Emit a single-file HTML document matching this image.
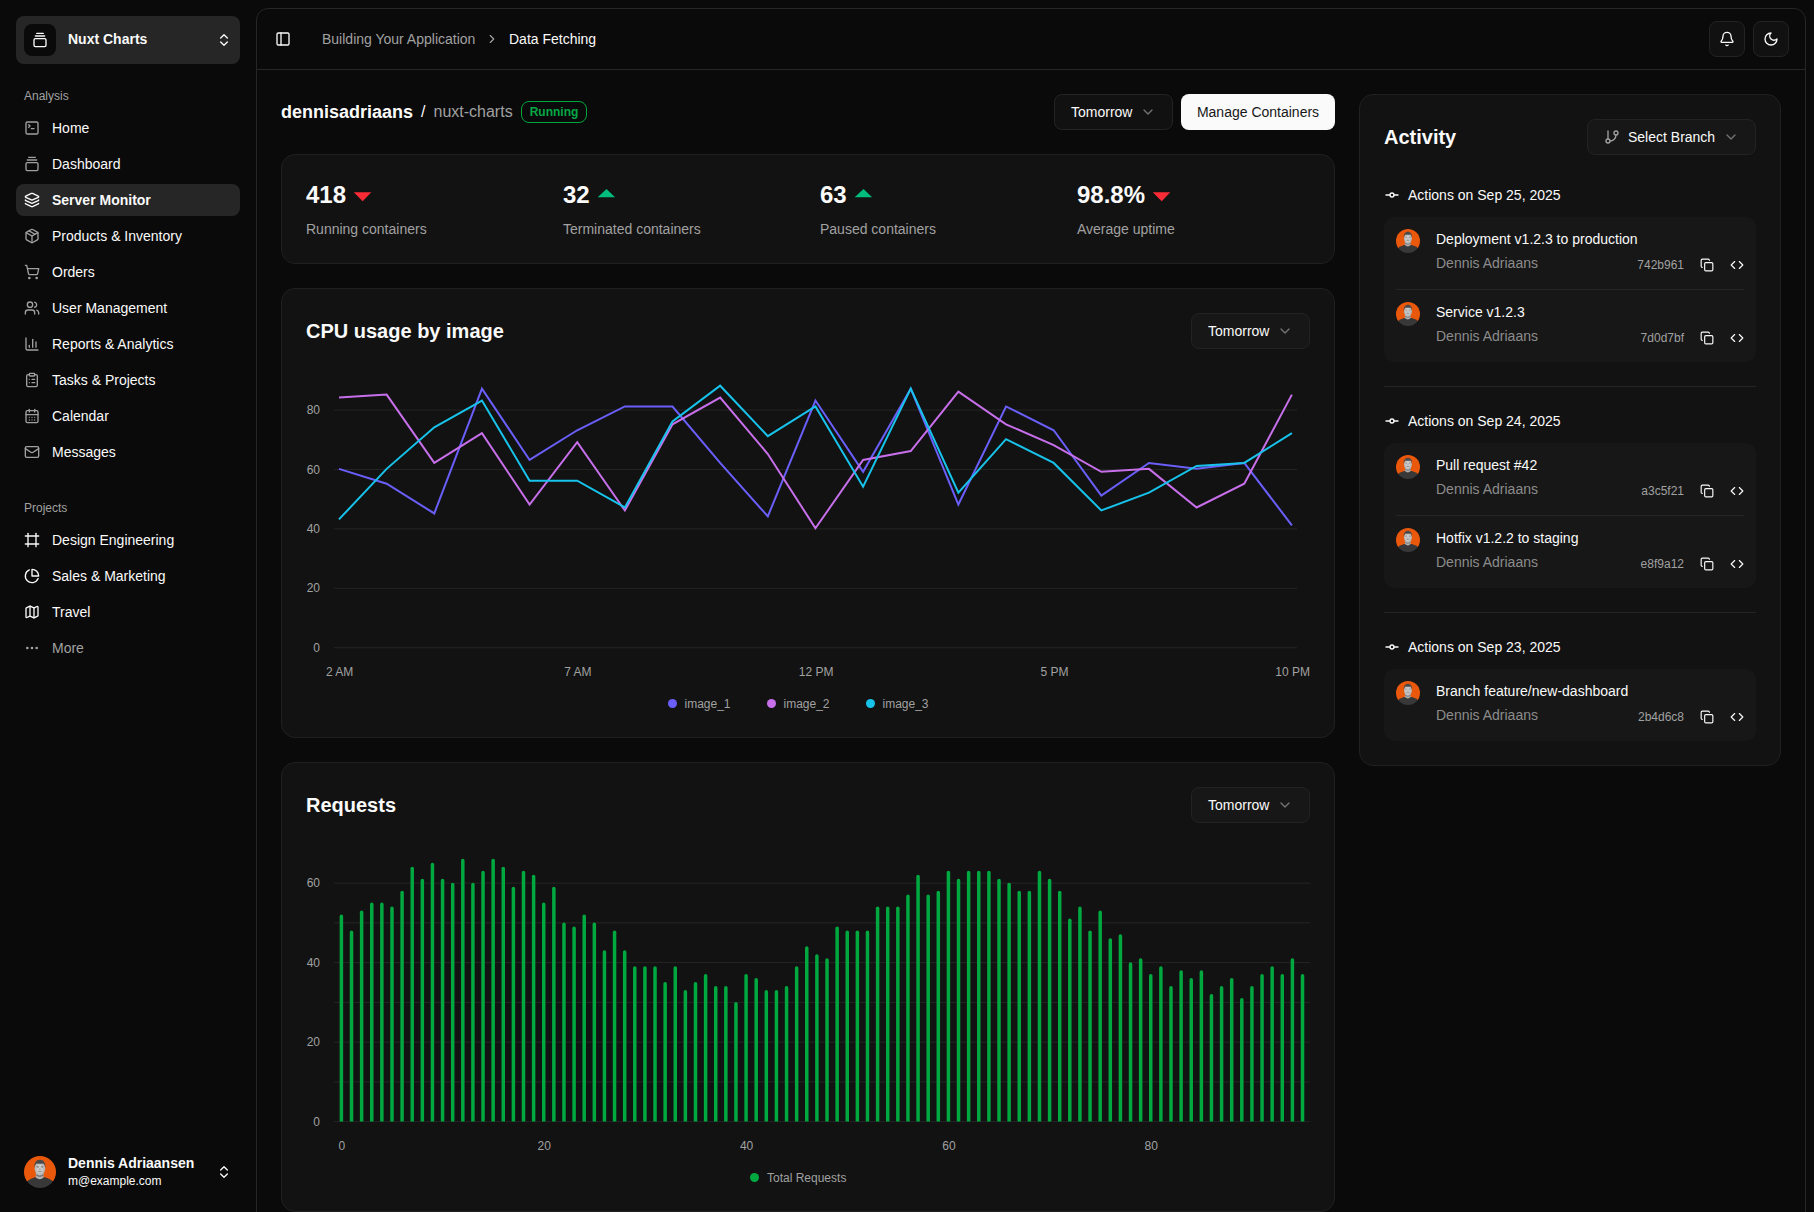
<!DOCTYPE html>
<html lang="en"><head><meta charset="utf-8"><title>Nuxt Charts - Server Monitor</title>
<style>
*{box-sizing:border-box;margin:0;padding:0}
html,body{width:1814px;height:1212px;overflow:hidden;background:#0a0a0a}
body{font-family:"Liberation Sans",sans-serif;color:#fafafa;position:relative}
.ic{position:absolute;display:block;overflow:visible}
.t{position:absolute;white-space:nowrap;color:#fafafa}
.b{font-weight:700}
.lbl{font-size:12px;line-height:16px;color:#a1a1a1}
.mi{font-size:14px;line-height:20px}
.team{position:absolute;left:16px;top:16px;width:224px;height:48px;border-radius:8px;background:#262626}
.teamicon{position:absolute;left:24px;top:24px;width:32px;height:32px;border-radius:8px;background:#0a0a0a}
.active{position:absolute;left:16px;width:224px;height:32px;border-radius:8px;background:#262626}
.inset{position:absolute;left:256px;top:8px;width:1550px;height:1230px;border:1px solid #262626;border-radius:12px;background:#0a0a0a}
.hline{position:absolute;left:257px;top:69px;width:1548px;height:1px;background:#262626}
.btn{position:absolute;border:1px solid #232323;border-radius:8px;background:#111111}
.btnw{position:absolute;border-radius:8px;background:#fafafa;color:#171717;font-size:14px;line-height:36px;text-align:center;white-space:nowrap}
.badge{position:absolute;border:1px solid #00a63e;border-radius:8px;color:#05a845;font-size:12px;font-weight:700;line-height:20px;text-align:center}
.card{position:absolute;border:1px solid #202020;border-radius:14px;background:#121212}
.num{font-size:24px;line-height:32px}
.ax{font-size:12px;line-height:16px;color:#a1a1a1}
.dot{position:absolute;width:9px;height:9px;border-radius:50%}
.abox{position:absolute;border-radius:10px;background:#171717}
.adiv{position:absolute;height:1px;background:#262626}
</style></head>
<body>
<!-- sidebar -->
<div class="team"></div><div class="teamicon"></div>
<svg class="ic" style="left:32px;top:32px;width:16px;height:16px;color:#fafafa" viewBox="0 0 24 24" fill="none" stroke="currentColor" stroke-width="2" stroke-linecap="round" stroke-linejoin="round" ><path d="M7 2h10"/><path d="M5 6h14"/><rect width="18" height="12" x="3" y="10" rx="2"/></svg>
<div class="t b" style="left:68px;top:29px;font-size:14px;line-height:20px">Nuxt Charts</div>
<svg class="ic" style="left:216px;top:32px;width:16px;height:16px;color:#fafafa" viewBox="0 0 24 24" fill="none" stroke="currentColor" stroke-width="2" stroke-linecap="round" stroke-linejoin="round" ><path d="m7 15 5 5 5-5"/><path d="m7 9 5-5 5 5"/></svg>
<div class="t lbl" style="left:24px;top:88px">Analysis</div>
<svg class="ic" style="left:24px;top:120px;width:16px;height:16px;color:#a1a1a1" viewBox="0 0 24 24" fill="none" stroke="currentColor" stroke-width="2" stroke-linecap="round" stroke-linejoin="round" ><path d="m7 11 2-2-2-2"/><path d="M11 13h4"/><rect width="18" height="18" x="3" y="3" rx="2" ry="2"/></svg>
<div class="t mi" style="left:52px;top:118px">Home</div>
<svg class="ic" style="left:24px;top:156px;width:16px;height:16px;color:#a1a1a1" viewBox="0 0 24 24" fill="none" stroke="currentColor" stroke-width="2" stroke-linecap="round" stroke-linejoin="round" ><path d="M7 2h10"/><path d="M5 6h14"/><rect width="18" height="12" x="3" y="10" rx="2"/></svg>
<div class="t mi" style="left:52px;top:154px">Dashboard</div>
<div class="active" style="top:184px"></div>
<svg class="ic" style="left:24px;top:192px;width:16px;height:16px;color:#fafafa" viewBox="0 0 24 24" fill="none" stroke="currentColor" stroke-width="2" stroke-linecap="round" stroke-linejoin="round" ><path d="M12.83 2.18a2 2 0 0 0-1.66 0L2.6 6.08a1 1 0 0 0 0 1.83l8.58 3.91a2 2 0 0 0 1.66 0l8.58-3.9a1 1 0 0 0 0-1.83z"/><path d="M2 12a1 1 0 0 0 .58.91l8.6 3.91a2 2 0 0 0 1.65 0l8.58-3.9A1 1 0 0 0 22 12"/><path d="M2 17a1 1 0 0 0 .58.91l8.6 3.91a2 2 0 0 0 1.65 0l8.58-3.9A1 1 0 0 0 22 17"/></svg>
<div class="t mi b" style="left:52px;top:190px">Server Monitor</div>
<svg class="ic" style="left:24px;top:228px;width:16px;height:16px;color:#a1a1a1" viewBox="0 0 24 24" fill="none" stroke="currentColor" stroke-width="2" stroke-linecap="round" stroke-linejoin="round" ><path d="M11 21.73a2 2 0 0 0 2 0l7-4A2 2 0 0 0 21 16V8a2 2 0 0 0-1-1.73l-7-4a2 2 0 0 0-2 0l-7 4A2 2 0 0 0 3 8v8a2 2 0 0 0 1 1.73z"/><path d="M12 22V12"/><polyline points="3.29 7 12 12 20.71 7"/><path d="m7.5 4.27 9 5.15"/></svg>
<div class="t mi" style="left:52px;top:226px">Products &amp; Inventory</div>
<svg class="ic" style="left:24px;top:264px;width:16px;height:16px;color:#a1a1a1" viewBox="0 0 24 24" fill="none" stroke="currentColor" stroke-width="2" stroke-linecap="round" stroke-linejoin="round" ><circle cx="8" cy="21" r="1"/><circle cx="19" cy="21" r="1"/><path d="M2.05 2.05h2l2.66 12.42a2 2 0 0 0 2 1.58h9.78a2 2 0 0 0 1.95-1.57l1.65-7.43H5.12"/></svg>
<div class="t mi" style="left:52px;top:262px">Orders</div>
<svg class="ic" style="left:24px;top:300px;width:16px;height:16px;color:#a1a1a1" viewBox="0 0 24 24" fill="none" stroke="currentColor" stroke-width="2" stroke-linecap="round" stroke-linejoin="round" ><path d="M16 21v-2a4 4 0 0 0-4-4H6a4 4 0 0 0-4 4v2"/><circle cx="9" cy="7" r="4"/><path d="M22 21v-2a4 4 0 0 0-3-3.87"/><path d="M16 3.13a4 4 0 0 1 0 7.75"/></svg>
<div class="t mi" style="left:52px;top:298px">User Management</div>
<svg class="ic" style="left:24px;top:336px;width:16px;height:16px;color:#a1a1a1" viewBox="0 0 24 24" fill="none" stroke="currentColor" stroke-width="2" stroke-linecap="round" stroke-linejoin="round" ><path d="M3 3v16a2 2 0 0 0 2 2h16"/><path d="M18 17V9"/><path d="M13 17V5"/><path d="M8 17v-3"/></svg>
<div class="t mi" style="left:52px;top:334px">Reports &amp; Analytics</div>
<svg class="ic" style="left:24px;top:372px;width:16px;height:16px;color:#a1a1a1" viewBox="0 0 24 24" fill="none" stroke="currentColor" stroke-width="2" stroke-linecap="round" stroke-linejoin="round" ><rect width="8" height="4" x="8" y="2" rx="1" ry="1"/><path d="M16 4h2a2 2 0 0 1 2 2v14a2 2 0 0 1-2 2H6a2 2 0 0 1-2-2V6a2 2 0 0 1 2-2h2"/><path d="M12 11h4"/><path d="M12 16h4"/><path d="M8 11h.01"/><path d="M8 16h.01"/></svg>
<div class="t mi" style="left:52px;top:370px">Tasks &amp; Projects</div>
<svg class="ic" style="left:24px;top:408px;width:16px;height:16px;color:#a1a1a1" viewBox="0 0 24 24" fill="none" stroke="currentColor" stroke-width="2" stroke-linecap="round" stroke-linejoin="round" ><path d="M8 2v4"/><path d="M16 2v4"/><rect width="18" height="18" x="3" y="4" rx="2"/><path d="M3 10h18"/><path d="M8 14h.01"/><path d="M12 14h.01"/><path d="M16 14h.01"/><path d="M8 18h.01"/><path d="M12 18h.01"/><path d="M16 18h.01"/></svg>
<div class="t mi" style="left:52px;top:406px">Calendar</div>
<svg class="ic" style="left:24px;top:444px;width:16px;height:16px;color:#a1a1a1" viewBox="0 0 24 24" fill="none" stroke="currentColor" stroke-width="2" stroke-linecap="round" stroke-linejoin="round" ><rect width="20" height="16" x="2" y="4" rx="2"/><path d="m22 7-8.97 5.7a1.94 1.94 0 0 1-2.06 0L2 7"/></svg>
<div class="t mi" style="left:52px;top:442px">Messages</div>
<div class="t lbl" style="left:24px;top:500px">Projects</div>
<svg class="ic" style="left:24px;top:532px;width:16px;height:16px;color:#fafafa" viewBox="0 0 24 24" fill="none" stroke="currentColor" stroke-width="2" stroke-linecap="round" stroke-linejoin="round" ><line x1="22" x2="2" y1="6" y2="6"/><line x1="22" x2="2" y1="18" y2="18"/><line x1="6" x2="6" y1="2" y2="22"/><line x1="18" x2="18" y1="2" y2="22"/></svg>
<div class="t mi" style="left:52px;top:530px">Design Engineering</div>
<svg class="ic" style="left:24px;top:568px;width:16px;height:16px;color:#fafafa" viewBox="0 0 24 24" fill="none" stroke="currentColor" stroke-width="2" stroke-linecap="round" stroke-linejoin="round" ><path d="M21.21 15.89A10 10 0 1 1 8 2.83"/><path d="M22 12A10 10 0 0 0 12 2v10z"/></svg>
<div class="t mi" style="left:52px;top:566px">Sales &amp; Marketing</div>
<svg class="ic" style="left:24px;top:604px;width:16px;height:16px;color:#fafafa" viewBox="0 0 24 24" fill="none" stroke="currentColor" stroke-width="2" stroke-linecap="round" stroke-linejoin="round" ><path d="M14.106 5.553a2 2 0 0 0 1.788 0l3.659-1.83A1 1 0 0 1 21 4.619v12.764a1 1 0 0 1-.553.894l-4.553 2.277a2 2 0 0 1-1.788 0l-4.212-2.106a2 2 0 0 0-1.788 0l-3.659 1.83A1 1 0 0 1 3 19.381V6.618a1 1 0 0 1 .553-.894l4.553-2.277a2 2 0 0 1 1.788 0z"/><path d="M15 5.764v15"/><path d="M9 3.236v15"/></svg>
<div class="t mi" style="left:52px;top:602px">Travel</div>
<svg class="ic" style="left:24px;top:640px;width:16px;height:16px;color:#a1a1a1" viewBox="0 0 24 24" fill="none" stroke="currentColor" stroke-width="2" stroke-linecap="round" stroke-linejoin="round" ><circle cx="12" cy="12" r="1"/><circle cx="19" cy="12" r="1"/><circle cx="5" cy="12" r="1"/></svg>
<div class="t mi" style="left:52px;top:638px;color:#a1a1a1">More</div>
<svg class="ic" style="left:24px;top:1156px;width:32px;height:32px" viewBox="0 0 32 32"><defs><clipPath id="avc"><circle cx="16" cy="16" r="16"/></clipPath></defs><g clip-path="url(#avc)"><path d="M0 0H32V25.300H28.800L20 22H12L3.200 25.300H0z" fill="#ea580c"/><path d="M1.500 26.500Q5 22.800 11 21.200H21Q27 22.800 30.500 26.500L32.500 32.500H-.500z" fill="#383838"/><path d="M11.900 16h7.400l.3 5.400q-3.600 3.600-7.900 0z" fill="#b0b0b0"/><path d="M12.300 18.300q3.700 2.600 7 0l.1 1.200q-3.600 2.600-7.200 0z" fill="#6b6b6b"/><ellipse cx="15.900" cy="12.400" rx="5.300" ry="6.900" fill="#b6b6b6"/><ellipse cx="15.700" cy="12.800" rx="3.400" ry="5" fill="#c8c8c8"/><path d="M10.400 12c-.5-5 1.800-8.200 5.500-8.200s6 3.200 5.500 8.200c-.5-2.600-1-3.900-2.200-4.600-2.200.5-4.400.5-6.600 0-1.200.7-1.700 2-2.200 4.600z" fill="#4a4a4a"/><ellipse cx="13.600" cy="10.800" rx="1.200" ry=".6" fill="#6a6a6a"/><ellipse cx="18.200" cy="10.800" rx="1.200" ry=".6" fill="#6a6a6a"/><path d="M13.500 14.700Q15.900 17.400 18.300 14.700Q15.900 15.700 13.500 14.700z" fill="#6f6f6f"/><ellipse cx="15.900" cy="13.200" rx=".8" ry="1" fill="#a8a8a8"/></g></svg>
<div class="t b" style="left:68px;top:1153px;font-size:14px;line-height:20px">Dennis Adriaansen</div>
<div class="t" style="left:68px;top:1173px;font-size:12px;line-height:16px">m@example.com</div>
<svg class="ic" style="left:216px;top:1164px;width:16px;height:16px;color:#fafafa" viewBox="0 0 24 24" fill="none" stroke="currentColor" stroke-width="2" stroke-linecap="round" stroke-linejoin="round" ><path d="m7 15 5 5 5-5"/><path d="m7 9 5-5 5 5"/></svg>
<!-- header -->
<div class="inset"></div><div class="hline"></div>
<svg class="ic" style="left:275px;top:31px;width:16px;height:16px;color:#fafafa" viewBox="0 0 24 24" fill="none" stroke="currentColor" stroke-width="2" stroke-linecap="round" stroke-linejoin="round" ><rect width="18" height="18" x="3" y="3" rx="2"/><path d="M9 3v18"/></svg>
<div class="t" style="left:322px;top:29px;font-size:14px;line-height:20px;color:#a1a1a1">Building Your Application</div>
<svg class="ic" style="left:485px;top:32px;width:14px;height:14px;color:#a1a1a1" viewBox="0 0 24 24" fill="none" stroke="currentColor" stroke-width="2" stroke-linecap="round" stroke-linejoin="round" ><path d="m9 18 6-6-6-6"/></svg>
<div class="t" style="left:509px;top:29px;font-size:14px;line-height:20px">Data Fetching</div>
<div class="btn" style="left:1709px;top:21px;width:36px;height:36px"></div>
<div class="btn" style="left:1753px;top:21px;width:36px;height:36px"></div>
<svg class="ic" style="left:1719px;top:31px;width:16px;height:16px;color:#fafafa" viewBox="0 0 24 24" fill="none" stroke="currentColor" stroke-width="2" stroke-linecap="round" stroke-linejoin="round" ><path d="M10.268 21a2 2 0 0 0 3.464 0"/><path d="M3.262 15.326A1 1 0 0 0 4 17h16a1 1 0 0 0 .74-1.673C19.41 13.956 18 12.499 18 8A6 6 0 0 0 6 8c0 4.499-1.411 5.956-2.738 7.326"/></svg>
<svg class="ic" style="left:1763px;top:31px;width:16px;height:16px;color:#fafafa" viewBox="0 0 24 24" fill="none" stroke="currentColor" stroke-width="2" stroke-linecap="round" stroke-linejoin="round" ><path d="M12 3a6 6 0 0 0 9 9 9 9 0 1 1-9-9Z"/></svg>
<!-- top -->
<div class="t b" style="left:281px;top:98px;font-size:18px;line-height:28px">dennisadriaans</div>
<div class="t" style="left:421px;top:100px;font-size:16px;line-height:24px">/</div>
<div class="t" style="left:433.5px;top:100px;font-size:16px;line-height:24px;color:#a1a1a1">nuxt-charts</div>
<div class="badge" style="left:521px;top:101px;width:66px;height:22px">Running</div>
<div class="btn" style="left:1054px;top:94px;width:119px;height:36px;background:#111111"></div><div class="t" style="left:1071px;top:102px;font-size:14px;line-height:20px">Tomorrow</div><svg class="ic" style="left:1140px;top:104px;width:16px;height:16px;color:#737373" viewBox="0 0 24 24" fill="none" stroke="currentColor" stroke-width="2" stroke-linecap="round" stroke-linejoin="round" ><path d="m6 9 6 6 6-6"/></svg>
<div class="btnw" style="left:1181px;top:94px;width:154px;height:36px">Manage Containers</div>
<div class="card" style="left:281px;top:154px;width:1054px;height:110px"></div>
<div class="t b num" id="n306" style="left:306px;top:179px">418</div>
<div class="t" style="left:306px;top:219px;font-size:14px;line-height:20px;color:#a1a1a1">Running containers</div>
<div class="t b num" id="n563" style="left:563px;top:179px">32</div>
<div class="t" style="left:563px;top:219px;font-size:14px;line-height:20px;color:#a1a1a1">Terminated containers</div>
<div class="t b num" id="n820" style="left:820px;top:179px">63</div>
<div class="t" style="left:820px;top:219px;font-size:14px;line-height:20px;color:#a1a1a1">Paused containers</div>
<div class="t b num" id="n1077" style="left:1077px;top:179px">98.8%</div>
<div class="t" style="left:1077px;top:219px;font-size:14px;line-height:20px;color:#a1a1a1">Average uptime</div>
<svg class="ic" style="left:353.8px;top:192.0px;width:17.6px;height:9.4px" viewBox="0 0 17.6 9.4"><path d="M-0.25 0.25H17.3L8.700 9.3z" fill="#fb2c36"/></svg>
<svg class="ic" style="left:597.6px;top:188.4px;width:17.6px;height:9.2px" viewBox="0 0 17.6 9.2"><path d="M-0.35 9.3H17.15L8.500 0.950z" fill="#00bc7d"/></svg>
<svg class="ic" style="left:854.6px;top:188.4px;width:17.6px;height:9.2px" viewBox="0 0 17.6 9.2"><path d="M-0.35 9.3H17.15L8.500 0.950z" fill="#00bc7d"/></svg>
<svg class="ic" style="left:1153.1px;top:192.0px;width:17.6px;height:9.4px" viewBox="0 0 17.6 9.4"><path d="M-0.25 0.25H17.3L8.700 9.3z" fill="#fb2c36"/></svg>
<!-- cpu -->
<div class="card" style="left:281px;top:288px;width:1054px;height:450px"></div>
<div class="t b" style="left:306px;top:317px;font-size:20px;line-height:28px">CPU usage by image</div>
<div class="btn" style="left:1191px;top:313px;width:119px;height:36px;background:#171717"></div><div class="t" style="left:1208px;top:321px;font-size:14px;line-height:20px">Tomorrow</div><svg class="ic" style="left:1277px;top:323px;width:16px;height:16px;color:#737373" viewBox="0 0 24 24" fill="none" stroke="currentColor" stroke-width="2" stroke-linecap="round" stroke-linejoin="round" ><path d="m6 9 6 6 6-6"/></svg>
<svg class="ic" style="left:0;top:0;width:1814px;height:1212px" viewBox="0 0 1814 1212"><rect x="334" y="647.20" width="963" height="1" fill="#252525"/><rect x="334" y="587.79" width="963" height="1" fill="#252525"/><rect x="334" y="528.38" width="963" height="1" fill="#252525"/><rect x="334" y="468.96" width="963" height="1" fill="#252525"/><rect x="334" y="409.55" width="963" height="1" fill="#252525"/><polyline points="339.00,468.86 386.64,483.72 434.29,513.42 481.94,388.66 529.58,459.95 577.23,430.25 624.87,406.48 672.52,406.48 720.16,462.92 767.81,516.39 815.45,400.54 863.10,471.83 910.74,388.66 958.38,504.51 1006.03,406.48 1053.68,430.25 1101.32,495.60 1148.97,462.92 1196.61,468.86 1244.26,462.92 1291.90,525.31" fill="none" stroke="#6a5ffb" stroke-width="2" stroke-linejoin="miter" stroke-linecap="butt"/><polyline points="339.00,397.57 386.64,394.60 434.29,462.92 481.94,433.22 529.58,504.51 577.23,442.13 624.87,510.45 672.52,424.31 720.16,397.57 767.81,454.01 815.45,528.28 863.10,459.95 910.74,451.04 958.38,391.63 1006.03,424.31 1053.68,445.10 1101.32,471.83 1148.97,468.86 1196.61,507.48 1244.26,483.72 1291.90,394.60" fill="none" stroke="#c76fea" stroke-width="2" stroke-linejoin="miter" stroke-linecap="butt"/><polyline points="339.00,519.36 386.64,468.86 434.29,427.28 481.94,400.54 529.58,480.75 577.23,480.75 624.87,507.48 672.52,421.33 720.16,385.69 767.81,436.19 815.45,406.48 863.10,486.69 910.74,388.66 958.38,492.63 1006.03,439.16 1053.68,462.92 1101.32,510.45 1148.97,492.63 1196.61,465.89 1244.26,462.92 1291.90,433.22" fill="none" stroke="#17c3eb" stroke-width="2" stroke-linejoin="miter" stroke-linecap="butt"/></svg>
<div class="t ax" style="left:290px;width:30px;text-align:right;top:639.7px">0</div>
<div class="t ax" style="left:290px;width:30px;text-align:right;top:580.3px">20</div>
<div class="t ax" style="left:290px;width:30px;text-align:right;top:520.9px">40</div>
<div class="t ax" style="left:290px;width:30px;text-align:right;top:461.5px">60</div>
<div class="t ax" style="left:290px;width:30px;text-align:right;top:402.1px">80</div>
<div class="t ax" style="left:299.7px;width:80px;text-align:center;top:664px">2 AM</div>
<div class="t ax" style="left:537.9px;width:80px;text-align:center;top:664px">7 AM</div>
<div class="t ax" style="left:776.2px;width:80px;text-align:center;top:664px">12 PM</div>
<div class="t ax" style="left:1014.4px;width:80px;text-align:center;top:664px">5 PM</div>
<div class="t ax" style="left:1252.6px;width:80px;text-align:center;top:664px">10 PM</div>
<div class="dot" style="left:667.5px;top:699.0px;background:#6a5ffb"></div>
<div class="t ax" style="left:684.5px;top:696px">image_1</div>
<div class="dot" style="left:766.5px;top:699.0px;background:#c76fea"></div>
<div class="t ax" style="left:783.5px;top:696px">image_2</div>
<div class="dot" style="left:865.5px;top:699.0px;background:#17c3eb"></div>
<div class="t ax" style="left:882.5px;top:696px">image_3</div>
<!-- requests -->
<div class="card" style="left:281px;top:762px;width:1054px;height:450px"></div>
<div class="t b" style="left:306px;top:791px;font-size:20px;line-height:28px">Requests</div>
<div class="btn" style="left:1191px;top:787px;width:119px;height:36px;background:#171717"></div><div class="t" style="left:1208px;top:795px;font-size:14px;line-height:20px">Tomorrow</div><svg class="ic" style="left:1277px;top:797px;width:16px;height:16px;color:#737373" viewBox="0 0 24 24" fill="none" stroke="currentColor" stroke-width="2" stroke-linecap="round" stroke-linejoin="round" ><path d="m6 9 6 6 6-6"/></svg>
<svg class="ic" style="left:0;top:0;width:1814px;height:1212px" viewBox="0 0 1814 1212"><rect x="334" y="1121.10" width="976" height="1" fill="#252525"/><rect x="334" y="1081.35" width="976" height="1" fill="#252525"/><rect x="334" y="1041.60" width="976" height="1" fill="#252525"/><rect x="334" y="1001.85" width="976" height="1" fill="#252525"/><rect x="334" y="962.10" width="976" height="1" fill="#252525"/><rect x="334" y="922.35" width="976" height="1" fill="#252525"/><rect x="334" y="882.60" width="976" height="1" fill="#252525"/><path d="M339.65 1121.6V916.25a1.75 1.75 0 0 1 3.5 0V1121.6z" fill="#00a940"/><path d="M349.77 1121.6V932.15a1.75 1.75 0 0 1 3.5 0V1121.6z" fill="#00a940"/><path d="M359.88 1121.6V912.27a1.75 1.75 0 0 1 3.5 0V1121.6z" fill="#00a940"/><path d="M370.00 1121.6V904.32a1.75 1.75 0 0 1 3.5 0V1121.6z" fill="#00a940"/><path d="M380.12 1121.6V904.32a1.75 1.75 0 0 1 3.5 0V1121.6z" fill="#00a940"/><path d="M390.24 1121.6V908.30a1.75 1.75 0 0 1 3.5 0V1121.6z" fill="#00a940"/><path d="M400.35 1121.6V892.40a1.75 1.75 0 0 1 3.5 0V1121.6z" fill="#00a940"/><path d="M410.47 1121.6V868.55a1.75 1.75 0 0 1 3.5 0V1121.6z" fill="#00a940"/><path d="M420.59 1121.6V880.47a1.75 1.75 0 0 1 3.5 0V1121.6z" fill="#00a940"/><path d="M430.70 1121.6V864.57a1.75 1.75 0 0 1 3.5 0V1121.6z" fill="#00a940"/><path d="M440.82 1121.6V880.47a1.75 1.75 0 0 1 3.5 0V1121.6z" fill="#00a940"/><path d="M450.94 1121.6V884.45a1.75 1.75 0 0 1 3.5 0V1121.6z" fill="#00a940"/><path d="M461.05 1121.6V860.60a1.75 1.75 0 0 1 3.5 0V1121.6z" fill="#00a940"/><path d="M471.17 1121.6V884.45a1.75 1.75 0 0 1 3.5 0V1121.6z" fill="#00a940"/><path d="M481.29 1121.6V872.52a1.75 1.75 0 0 1 3.5 0V1121.6z" fill="#00a940"/><path d="M491.40 1121.6V860.60a1.75 1.75 0 0 1 3.5 0V1121.6z" fill="#00a940"/><path d="M501.52 1121.6V868.55a1.75 1.75 0 0 1 3.5 0V1121.6z" fill="#00a940"/><path d="M511.64 1121.6V888.42a1.75 1.75 0 0 1 3.5 0V1121.6z" fill="#00a940"/><path d="M521.76 1121.6V872.52a1.75 1.75 0 0 1 3.5 0V1121.6z" fill="#00a940"/><path d="M531.87 1121.6V876.50a1.75 1.75 0 0 1 3.5 0V1121.6z" fill="#00a940"/><path d="M541.99 1121.6V904.32a1.75 1.75 0 0 1 3.5 0V1121.6z" fill="#00a940"/><path d="M552.11 1121.6V888.42a1.75 1.75 0 0 1 3.5 0V1121.6z" fill="#00a940"/><path d="M562.22 1121.6V924.20a1.75 1.75 0 0 1 3.5 0V1121.6z" fill="#00a940"/><path d="M572.34 1121.6V928.17a1.75 1.75 0 0 1 3.5 0V1121.6z" fill="#00a940"/><path d="M582.46 1121.6V916.25a1.75 1.75 0 0 1 3.5 0V1121.6z" fill="#00a940"/><path d="M592.58 1121.6V924.20a1.75 1.75 0 0 1 3.5 0V1121.6z" fill="#00a940"/><path d="M602.69 1121.6V952.02a1.75 1.75 0 0 1 3.5 0V1121.6z" fill="#00a940"/><path d="M612.81 1121.6V932.15a1.75 1.75 0 0 1 3.5 0V1121.6z" fill="#00a940"/><path d="M622.93 1121.6V952.02a1.75 1.75 0 0 1 3.5 0V1121.6z" fill="#00a940"/><path d="M633.04 1121.6V967.92a1.75 1.75 0 0 1 3.5 0V1121.6z" fill="#00a940"/><path d="M643.16 1121.6V967.92a1.75 1.75 0 0 1 3.5 0V1121.6z" fill="#00a940"/><path d="M653.28 1121.6V967.92a1.75 1.75 0 0 1 3.5 0V1121.6z" fill="#00a940"/><path d="M663.39 1121.6V983.82a1.75 1.75 0 0 1 3.5 0V1121.6z" fill="#00a940"/><path d="M673.51 1121.6V967.92a1.75 1.75 0 0 1 3.5 0V1121.6z" fill="#00a940"/><path d="M683.63 1121.6V991.77a1.75 1.75 0 0 1 3.5 0V1121.6z" fill="#00a940"/><path d="M693.75 1121.6V983.82a1.75 1.75 0 0 1 3.5 0V1121.6z" fill="#00a940"/><path d="M703.86 1121.6V975.87a1.75 1.75 0 0 1 3.5 0V1121.6z" fill="#00a940"/><path d="M713.98 1121.6V987.80a1.75 1.75 0 0 1 3.5 0V1121.6z" fill="#00a940"/><path d="M724.10 1121.6V987.80a1.75 1.75 0 0 1 3.5 0V1121.6z" fill="#00a940"/><path d="M734.21 1121.6V1003.70a1.75 1.75 0 0 1 3.5 0V1121.6z" fill="#00a940"/><path d="M744.33 1121.6V975.87a1.75 1.75 0 0 1 3.5 0V1121.6z" fill="#00a940"/><path d="M754.45 1121.6V979.85a1.75 1.75 0 0 1 3.5 0V1121.6z" fill="#00a940"/><path d="M764.56 1121.6V991.77a1.75 1.75 0 0 1 3.5 0V1121.6z" fill="#00a940"/><path d="M774.68 1121.6V991.77a1.75 1.75 0 0 1 3.5 0V1121.6z" fill="#00a940"/><path d="M784.80 1121.6V987.80a1.75 1.75 0 0 1 3.5 0V1121.6z" fill="#00a940"/><path d="M794.91 1121.6V967.92a1.75 1.75 0 0 1 3.5 0V1121.6z" fill="#00a940"/><path d="M805.03 1121.6V948.05a1.75 1.75 0 0 1 3.5 0V1121.6z" fill="#00a940"/><path d="M815.15 1121.6V956.00a1.75 1.75 0 0 1 3.5 0V1121.6z" fill="#00a940"/><path d="M825.27 1121.6V959.97a1.75 1.75 0 0 1 3.5 0V1121.6z" fill="#00a940"/><path d="M835.38 1121.6V928.17a1.75 1.75 0 0 1 3.5 0V1121.6z" fill="#00a940"/><path d="M845.50 1121.6V932.15a1.75 1.75 0 0 1 3.5 0V1121.6z" fill="#00a940"/><path d="M855.62 1121.6V932.15a1.75 1.75 0 0 1 3.5 0V1121.6z" fill="#00a940"/><path d="M865.73 1121.6V932.15a1.75 1.75 0 0 1 3.5 0V1121.6z" fill="#00a940"/><path d="M875.85 1121.6V908.30a1.75 1.75 0 0 1 3.5 0V1121.6z" fill="#00a940"/><path d="M885.97 1121.6V908.30a1.75 1.75 0 0 1 3.5 0V1121.6z" fill="#00a940"/><path d="M896.09 1121.6V908.30a1.75 1.75 0 0 1 3.5 0V1121.6z" fill="#00a940"/><path d="M906.20 1121.6V896.37a1.75 1.75 0 0 1 3.5 0V1121.6z" fill="#00a940"/><path d="M916.32 1121.6V876.50a1.75 1.75 0 0 1 3.5 0V1121.6z" fill="#00a940"/><path d="M926.44 1121.6V896.37a1.75 1.75 0 0 1 3.5 0V1121.6z" fill="#00a940"/><path d="M936.55 1121.6V892.40a1.75 1.75 0 0 1 3.5 0V1121.6z" fill="#00a940"/><path d="M946.67 1121.6V872.52a1.75 1.75 0 0 1 3.5 0V1121.6z" fill="#00a940"/><path d="M956.79 1121.6V880.47a1.75 1.75 0 0 1 3.5 0V1121.6z" fill="#00a940"/><path d="M966.90 1121.6V872.52a1.75 1.75 0 0 1 3.5 0V1121.6z" fill="#00a940"/><path d="M977.02 1121.6V872.52a1.75 1.75 0 0 1 3.5 0V1121.6z" fill="#00a940"/><path d="M987.14 1121.6V872.52a1.75 1.75 0 0 1 3.5 0V1121.6z" fill="#00a940"/><path d="M997.25 1121.6V880.47a1.75 1.75 0 0 1 3.5 0V1121.6z" fill="#00a940"/><path d="M1007.37 1121.6V884.45a1.75 1.75 0 0 1 3.5 0V1121.6z" fill="#00a940"/><path d="M1017.49 1121.6V892.40a1.75 1.75 0 0 1 3.5 0V1121.6z" fill="#00a940"/><path d="M1027.61 1121.6V892.40a1.75 1.75 0 0 1 3.5 0V1121.6z" fill="#00a940"/><path d="M1037.72 1121.6V872.52a1.75 1.75 0 0 1 3.5 0V1121.6z" fill="#00a940"/><path d="M1047.84 1121.6V880.47a1.75 1.75 0 0 1 3.5 0V1121.6z" fill="#00a940"/><path d="M1057.96 1121.6V892.40a1.75 1.75 0 0 1 3.5 0V1121.6z" fill="#00a940"/><path d="M1068.07 1121.6V920.22a1.75 1.75 0 0 1 3.5 0V1121.6z" fill="#00a940"/><path d="M1078.19 1121.6V908.30a1.75 1.75 0 0 1 3.5 0V1121.6z" fill="#00a940"/><path d="M1088.31 1121.6V932.15a1.75 1.75 0 0 1 3.5 0V1121.6z" fill="#00a940"/><path d="M1098.43 1121.6V912.27a1.75 1.75 0 0 1 3.5 0V1121.6z" fill="#00a940"/><path d="M1108.54 1121.6V940.10a1.75 1.75 0 0 1 3.5 0V1121.6z" fill="#00a940"/><path d="M1118.66 1121.6V936.12a1.75 1.75 0 0 1 3.5 0V1121.6z" fill="#00a940"/><path d="M1128.78 1121.6V963.95a1.75 1.75 0 0 1 3.5 0V1121.6z" fill="#00a940"/><path d="M1138.89 1121.6V959.97a1.75 1.75 0 0 1 3.5 0V1121.6z" fill="#00a940"/><path d="M1149.01 1121.6V975.87a1.75 1.75 0 0 1 3.5 0V1121.6z" fill="#00a940"/><path d="M1159.13 1121.6V967.92a1.75 1.75 0 0 1 3.5 0V1121.6z" fill="#00a940"/><path d="M1169.24 1121.6V987.80a1.75 1.75 0 0 1 3.5 0V1121.6z" fill="#00a940"/><path d="M1179.36 1121.6V971.90a1.75 1.75 0 0 1 3.5 0V1121.6z" fill="#00a940"/><path d="M1189.48 1121.6V979.85a1.75 1.75 0 0 1 3.5 0V1121.6z" fill="#00a940"/><path d="M1199.60 1121.6V971.90a1.75 1.75 0 0 1 3.5 0V1121.6z" fill="#00a940"/><path d="M1209.71 1121.6V995.75a1.75 1.75 0 0 1 3.5 0V1121.6z" fill="#00a940"/><path d="M1219.83 1121.6V987.80a1.75 1.75 0 0 1 3.5 0V1121.6z" fill="#00a940"/><path d="M1229.95 1121.6V979.85a1.75 1.75 0 0 1 3.5 0V1121.6z" fill="#00a940"/><path d="M1240.06 1121.6V999.72a1.75 1.75 0 0 1 3.5 0V1121.6z" fill="#00a940"/><path d="M1250.18 1121.6V987.80a1.75 1.75 0 0 1 3.5 0V1121.6z" fill="#00a940"/><path d="M1260.30 1121.6V975.87a1.75 1.75 0 0 1 3.5 0V1121.6z" fill="#00a940"/><path d="M1270.41 1121.6V967.92a1.75 1.75 0 0 1 3.5 0V1121.6z" fill="#00a940"/><path d="M1280.53 1121.6V975.87a1.75 1.75 0 0 1 3.5 0V1121.6z" fill="#00a940"/><path d="M1290.65 1121.6V959.97a1.75 1.75 0 0 1 3.5 0V1121.6z" fill="#00a940"/><path d="M1300.77 1121.6V975.87a1.75 1.75 0 0 1 3.5 0V1121.6z" fill="#00a940"/></svg>
<div class="t ax" style="left:290px;width:30px;text-align:right;top:1113.6px">0</div>
<div class="t ax" style="left:290px;width:30px;text-align:right;top:1034.1px">20</div>
<div class="t ax" style="left:290px;width:30px;text-align:right;top:954.6px">40</div>
<div class="t ax" style="left:290px;width:30px;text-align:right;top:875.1px">60</div>
<div class="t ax" style="left:301.9px;width:80px;text-align:center;top:1138px">0</div>
<div class="t ax" style="left:504.2px;width:80px;text-align:center;top:1138px">20</div>
<div class="t ax" style="left:706.6px;width:80px;text-align:center;top:1138px">40</div>
<div class="t ax" style="left:908.9px;width:80px;text-align:center;top:1138px">60</div>
<div class="t ax" style="left:1111.3px;width:80px;text-align:center;top:1138px">80</div>
<div class="dot" style="left:749.5px;top:1173.0px;background:#00a940"></div>
<div class="t ax" style="left:767px;top:1170px">Total Requests</div>
<!-- activity -->
<div class="card" style="left:1359px;top:94px;width:422px;height:672px"></div>
<div class="t b" style="left:1384px;top:123px;font-size:20px;line-height:28px">Activity</div>
<div class="btn" style="left:1587px;top:119px;width:169px;height:36px;background:#171717"></div>
<svg class="ic" style="left:1603.5px;top:129px;width:16px;height:16px;color:#a1a1a1" viewBox="0 0 24 24" fill="none" stroke="currentColor" stroke-width="2" stroke-linecap="round" stroke-linejoin="round" ><line x1="6" x2="6" y1="3" y2="15"/><circle cx="18" cy="6" r="3"/><circle cx="6" cy="18" r="3"/><path d="M18 9a9 9 0 0 1-9 9"/></svg>
<div class="t" style="left:1628px;top:127px;font-size:14px;line-height:20px">Select Branch</div>
<svg class="ic" style="left:1723px;top:129px;width:16px;height:16px;color:#737373" viewBox="0 0 24 24" fill="none" stroke="currentColor" stroke-width="2" stroke-linecap="round" stroke-linejoin="round" ><path d="m6 9 6 6 6-6"/></svg>
<svg class="ic" style="left:1384px;top:187px;width:16px;height:16px;color:#fafafa" viewBox="0 0 24 24" fill="none" stroke="currentColor" stroke-width="2" stroke-linecap="round" stroke-linejoin="round" ><circle cx="12" cy="12" r="3"/><line x1="3" x2="9" y1="12" y2="12"/><line x1="15" x2="21" y1="12" y2="12"/></svg>
<div class="t" style="left:1408px;top:185px;font-size:14px;line-height:20px">Actions on Sep 25, 2025</div>
<div class="abox" style="left:1384px;top:217px;width:372px;height:145px"></div>
<svg class="ic" style="left:1396px;top:229px;width:24px;height:24px" viewBox="0 0 32 32"><defs><clipPath id="avc"><circle cx="16" cy="16" r="16"/></clipPath></defs><g clip-path="url(#avc)"><path d="M0 0H32V25.300H28.800L20 22H12L3.200 25.300H0z" fill="#ea580c"/><path d="M1.500 26.500Q5 22.800 11 21.200H21Q27 22.800 30.500 26.500L32.500 32.500H-.500z" fill="#383838"/><path d="M11.900 16h7.400l.3 5.400q-3.600 3.600-7.900 0z" fill="#b0b0b0"/><path d="M12.300 18.300q3.700 2.600 7 0l.1 1.200q-3.600 2.600-7.200 0z" fill="#6b6b6b"/><ellipse cx="15.900" cy="12.400" rx="5.300" ry="6.900" fill="#b6b6b6"/><ellipse cx="15.700" cy="12.800" rx="3.400" ry="5" fill="#c8c8c8"/><path d="M10.400 12c-.5-5 1.800-8.200 5.500-8.200s6 3.200 5.500 8.200c-.5-2.600-1-3.900-2.200-4.600-2.200.5-4.400.5-6.600 0-1.200.7-1.700 2-2.200 4.600z" fill="#4a4a4a"/><ellipse cx="13.600" cy="10.800" rx="1.200" ry=".6" fill="#6a6a6a"/><ellipse cx="18.200" cy="10.800" rx="1.200" ry=".6" fill="#6a6a6a"/><path d="M13.500 14.700Q15.900 17.400 18.300 14.700Q15.900 15.700 13.500 14.700z" fill="#6f6f6f"/><ellipse cx="15.900" cy="13.200" rx=".8" ry="1" fill="#a8a8a8"/></g></svg>
<div class="t" style="left:1436px;top:229px;font-size:14px;line-height:20px">Deployment v1.2.3 to production</div>
<div class="t" style="left:1436px;top:253px;font-size:14px;line-height:20px;color:#8c8c8c">Dennis Adriaans</div>
<div class="t" style="left:1584px;width:100px;text-align:right;top:257px;font-size:12px;line-height:16px;color:#a1a1a1">742b961</div>
<svg class="ic" style="left:1700px;top:258.1px;width:14px;height:14px;color:#fafafa" viewBox="0 0 24 24" fill="none" stroke="currentColor" stroke-width="2" stroke-linecap="round" stroke-linejoin="round" ><rect width="14" height="14" x="8" y="8" rx="2" ry="2"/><path d="M4 16c-1.1 0-2-.9-2-2V4c0-1.1.9-2 2-2h10c1.1 0 2 .9 2 2"/></svg>
<svg class="ic" style="left:1730px;top:258.1px;width:14px;height:14px;color:#fafafa" viewBox="0 0 24 24" fill="none" stroke="currentColor" stroke-width="2" stroke-linecap="round" stroke-linejoin="round" ><polyline points="16 18 22 12 16 6"/><polyline points="8 6 2 12 8 18"/></svg>
<div class="adiv" style="left:1396px;top:289px;width:348px"></div>
<svg class="ic" style="left:1396px;top:302px;width:24px;height:24px" viewBox="0 0 32 32"><defs><clipPath id="avc"><circle cx="16" cy="16" r="16"/></clipPath></defs><g clip-path="url(#avc)"><path d="M0 0H32V25.300H28.800L20 22H12L3.200 25.300H0z" fill="#ea580c"/><path d="M1.500 26.500Q5 22.800 11 21.200H21Q27 22.800 30.500 26.500L32.500 32.500H-.500z" fill="#383838"/><path d="M11.900 16h7.400l.3 5.400q-3.600 3.600-7.900 0z" fill="#b0b0b0"/><path d="M12.300 18.300q3.700 2.600 7 0l.1 1.200q-3.600 2.600-7.200 0z" fill="#6b6b6b"/><ellipse cx="15.900" cy="12.400" rx="5.300" ry="6.900" fill="#b6b6b6"/><ellipse cx="15.700" cy="12.800" rx="3.400" ry="5" fill="#c8c8c8"/><path d="M10.400 12c-.5-5 1.800-8.200 5.500-8.200s6 3.200 5.500 8.200c-.5-2.600-1-3.900-2.200-4.600-2.200.5-4.400.5-6.600 0-1.200.7-1.700 2-2.200 4.600z" fill="#4a4a4a"/><ellipse cx="13.600" cy="10.800" rx="1.200" ry=".6" fill="#6a6a6a"/><ellipse cx="18.200" cy="10.800" rx="1.200" ry=".6" fill="#6a6a6a"/><path d="M13.500 14.700Q15.900 17.400 18.300 14.700Q15.900 15.700 13.500 14.700z" fill="#6f6f6f"/><ellipse cx="15.900" cy="13.200" rx=".8" ry="1" fill="#a8a8a8"/></g></svg>
<div class="t" style="left:1436px;top:302px;font-size:14px;line-height:20px">Service v1.2.3</div>
<div class="t" style="left:1436px;top:326px;font-size:14px;line-height:20px;color:#8c8c8c">Dennis Adriaans</div>
<div class="t" style="left:1584px;width:100px;text-align:right;top:330px;font-size:12px;line-height:16px;color:#a1a1a1">7d0d7bf</div>
<svg class="ic" style="left:1700px;top:331.1px;width:14px;height:14px;color:#fafafa" viewBox="0 0 24 24" fill="none" stroke="currentColor" stroke-width="2" stroke-linecap="round" stroke-linejoin="round" ><rect width="14" height="14" x="8" y="8" rx="2" ry="2"/><path d="M4 16c-1.1 0-2-.9-2-2V4c0-1.1.9-2 2-2h10c1.1 0 2 .9 2 2"/></svg>
<svg class="ic" style="left:1730px;top:331.1px;width:14px;height:14px;color:#fafafa" viewBox="0 0 24 24" fill="none" stroke="currentColor" stroke-width="2" stroke-linecap="round" stroke-linejoin="round" ><polyline points="16 18 22 12 16 6"/><polyline points="8 6 2 12 8 18"/></svg>
<div class="adiv" style="left:1384px;top:386px;width:372px;background:#242424"></div>
<svg class="ic" style="left:1384px;top:413px;width:16px;height:16px;color:#fafafa" viewBox="0 0 24 24" fill="none" stroke="currentColor" stroke-width="2" stroke-linecap="round" stroke-linejoin="round" ><circle cx="12" cy="12" r="3"/><line x1="3" x2="9" y1="12" y2="12"/><line x1="15" x2="21" y1="12" y2="12"/></svg>
<div class="t" style="left:1408px;top:411px;font-size:14px;line-height:20px">Actions on Sep 24, 2025</div>
<div class="abox" style="left:1384px;top:443px;width:372px;height:145px"></div>
<svg class="ic" style="left:1396px;top:455px;width:24px;height:24px" viewBox="0 0 32 32"><defs><clipPath id="avc"><circle cx="16" cy="16" r="16"/></clipPath></defs><g clip-path="url(#avc)"><path d="M0 0H32V25.300H28.800L20 22H12L3.200 25.300H0z" fill="#ea580c"/><path d="M1.500 26.500Q5 22.800 11 21.200H21Q27 22.800 30.500 26.500L32.500 32.500H-.500z" fill="#383838"/><path d="M11.900 16h7.400l.3 5.400q-3.600 3.600-7.900 0z" fill="#b0b0b0"/><path d="M12.300 18.300q3.700 2.600 7 0l.1 1.200q-3.600 2.600-7.200 0z" fill="#6b6b6b"/><ellipse cx="15.900" cy="12.400" rx="5.300" ry="6.900" fill="#b6b6b6"/><ellipse cx="15.700" cy="12.800" rx="3.400" ry="5" fill="#c8c8c8"/><path d="M10.400 12c-.5-5 1.800-8.200 5.500-8.200s6 3.200 5.500 8.200c-.5-2.600-1-3.900-2.200-4.600-2.200.5-4.400.5-6.600 0-1.200.7-1.700 2-2.200 4.600z" fill="#4a4a4a"/><ellipse cx="13.600" cy="10.800" rx="1.200" ry=".6" fill="#6a6a6a"/><ellipse cx="18.200" cy="10.800" rx="1.200" ry=".6" fill="#6a6a6a"/><path d="M13.500 14.700Q15.900 17.400 18.300 14.700Q15.900 15.700 13.500 14.700z" fill="#6f6f6f"/><ellipse cx="15.900" cy="13.200" rx=".8" ry="1" fill="#a8a8a8"/></g></svg>
<div class="t" style="left:1436px;top:455px;font-size:14px;line-height:20px">Pull request #42</div>
<div class="t" style="left:1436px;top:479px;font-size:14px;line-height:20px;color:#8c8c8c">Dennis Adriaans</div>
<div class="t" style="left:1584px;width:100px;text-align:right;top:483px;font-size:12px;line-height:16px;color:#a1a1a1">a3c5f21</div>
<svg class="ic" style="left:1700px;top:484.1px;width:14px;height:14px;color:#fafafa" viewBox="0 0 24 24" fill="none" stroke="currentColor" stroke-width="2" stroke-linecap="round" stroke-linejoin="round" ><rect width="14" height="14" x="8" y="8" rx="2" ry="2"/><path d="M4 16c-1.1 0-2-.9-2-2V4c0-1.1.9-2 2-2h10c1.1 0 2 .9 2 2"/></svg>
<svg class="ic" style="left:1730px;top:484.1px;width:14px;height:14px;color:#fafafa" viewBox="0 0 24 24" fill="none" stroke="currentColor" stroke-width="2" stroke-linecap="round" stroke-linejoin="round" ><polyline points="16 18 22 12 16 6"/><polyline points="8 6 2 12 8 18"/></svg>
<div class="adiv" style="left:1396px;top:515px;width:348px"></div>
<svg class="ic" style="left:1396px;top:528px;width:24px;height:24px" viewBox="0 0 32 32"><defs><clipPath id="avc"><circle cx="16" cy="16" r="16"/></clipPath></defs><g clip-path="url(#avc)"><path d="M0 0H32V25.300H28.800L20 22H12L3.200 25.300H0z" fill="#ea580c"/><path d="M1.500 26.500Q5 22.800 11 21.200H21Q27 22.800 30.500 26.500L32.500 32.500H-.500z" fill="#383838"/><path d="M11.900 16h7.400l.3 5.400q-3.600 3.600-7.900 0z" fill="#b0b0b0"/><path d="M12.300 18.300q3.700 2.600 7 0l.1 1.200q-3.600 2.600-7.200 0z" fill="#6b6b6b"/><ellipse cx="15.900" cy="12.400" rx="5.300" ry="6.900" fill="#b6b6b6"/><ellipse cx="15.700" cy="12.800" rx="3.400" ry="5" fill="#c8c8c8"/><path d="M10.400 12c-.5-5 1.800-8.200 5.500-8.200s6 3.200 5.500 8.200c-.5-2.600-1-3.900-2.200-4.600-2.200.5-4.400.5-6.600 0-1.200.7-1.700 2-2.200 4.600z" fill="#4a4a4a"/><ellipse cx="13.600" cy="10.800" rx="1.200" ry=".6" fill="#6a6a6a"/><ellipse cx="18.200" cy="10.800" rx="1.200" ry=".6" fill="#6a6a6a"/><path d="M13.500 14.700Q15.900 17.400 18.300 14.700Q15.900 15.700 13.500 14.700z" fill="#6f6f6f"/><ellipse cx="15.900" cy="13.200" rx=".8" ry="1" fill="#a8a8a8"/></g></svg>
<div class="t" style="left:1436px;top:528px;font-size:14px;line-height:20px">Hotfix v1.2.2 to staging</div>
<div class="t" style="left:1436px;top:552px;font-size:14px;line-height:20px;color:#8c8c8c">Dennis Adriaans</div>
<div class="t" style="left:1584px;width:100px;text-align:right;top:556px;font-size:12px;line-height:16px;color:#a1a1a1">e8f9a12</div>
<svg class="ic" style="left:1700px;top:557.1px;width:14px;height:14px;color:#fafafa" viewBox="0 0 24 24" fill="none" stroke="currentColor" stroke-width="2" stroke-linecap="round" stroke-linejoin="round" ><rect width="14" height="14" x="8" y="8" rx="2" ry="2"/><path d="M4 16c-1.1 0-2-.9-2-2V4c0-1.1.9-2 2-2h10c1.1 0 2 .9 2 2"/></svg>
<svg class="ic" style="left:1730px;top:557.1px;width:14px;height:14px;color:#fafafa" viewBox="0 0 24 24" fill="none" stroke="currentColor" stroke-width="2" stroke-linecap="round" stroke-linejoin="round" ><polyline points="16 18 22 12 16 6"/><polyline points="8 6 2 12 8 18"/></svg>
<div class="adiv" style="left:1384px;top:612px;width:372px;background:#242424"></div>
<svg class="ic" style="left:1384px;top:639px;width:16px;height:16px;color:#fafafa" viewBox="0 0 24 24" fill="none" stroke="currentColor" stroke-width="2" stroke-linecap="round" stroke-linejoin="round" ><circle cx="12" cy="12" r="3"/><line x1="3" x2="9" y1="12" y2="12"/><line x1="15" x2="21" y1="12" y2="12"/></svg>
<div class="t" style="left:1408px;top:637px;font-size:14px;line-height:20px">Actions on Sep 23, 2025</div>
<div class="abox" style="left:1384px;top:669px;width:372px;height:72px"></div>
<svg class="ic" style="left:1396px;top:681px;width:24px;height:24px" viewBox="0 0 32 32"><defs><clipPath id="avc"><circle cx="16" cy="16" r="16"/></clipPath></defs><g clip-path="url(#avc)"><path d="M0 0H32V25.300H28.800L20 22H12L3.200 25.300H0z" fill="#ea580c"/><path d="M1.500 26.500Q5 22.800 11 21.200H21Q27 22.800 30.500 26.500L32.500 32.500H-.500z" fill="#383838"/><path d="M11.900 16h7.400l.3 5.400q-3.600 3.600-7.900 0z" fill="#b0b0b0"/><path d="M12.300 18.300q3.700 2.600 7 0l.1 1.200q-3.600 2.600-7.200 0z" fill="#6b6b6b"/><ellipse cx="15.900" cy="12.400" rx="5.300" ry="6.900" fill="#b6b6b6"/><ellipse cx="15.700" cy="12.800" rx="3.400" ry="5" fill="#c8c8c8"/><path d="M10.400 12c-.5-5 1.800-8.200 5.500-8.200s6 3.200 5.500 8.200c-.5-2.600-1-3.900-2.200-4.600-2.200.5-4.400.5-6.600 0-1.200.7-1.700 2-2.200 4.600z" fill="#4a4a4a"/><ellipse cx="13.600" cy="10.800" rx="1.200" ry=".6" fill="#6a6a6a"/><ellipse cx="18.200" cy="10.800" rx="1.200" ry=".6" fill="#6a6a6a"/><path d="M13.500 14.700Q15.900 17.400 18.300 14.700Q15.900 15.700 13.500 14.700z" fill="#6f6f6f"/><ellipse cx="15.900" cy="13.200" rx=".8" ry="1" fill="#a8a8a8"/></g></svg>
<div class="t" style="left:1436px;top:681px;font-size:14px;line-height:20px">Branch feature/new-dashboard</div>
<div class="t" style="left:1436px;top:705px;font-size:14px;line-height:20px;color:#8c8c8c">Dennis Adriaans</div>
<div class="t" style="left:1584px;width:100px;text-align:right;top:709px;font-size:12px;line-height:16px;color:#a1a1a1">2b4d6c8</div>
<svg class="ic" style="left:1700px;top:710.1px;width:14px;height:14px;color:#fafafa" viewBox="0 0 24 24" fill="none" stroke="currentColor" stroke-width="2" stroke-linecap="round" stroke-linejoin="round" ><rect width="14" height="14" x="8" y="8" rx="2" ry="2"/><path d="M4 16c-1.1 0-2-.9-2-2V4c0-1.1.9-2 2-2h10c1.1 0 2 .9 2 2"/></svg>
<svg class="ic" style="left:1730px;top:710.1px;width:14px;height:14px;color:#fafafa" viewBox="0 0 24 24" fill="none" stroke="currentColor" stroke-width="2" stroke-linecap="round" stroke-linejoin="round" ><polyline points="16 18 22 12 16 6"/><polyline points="8 6 2 12 8 18"/></svg>
</body></html>
